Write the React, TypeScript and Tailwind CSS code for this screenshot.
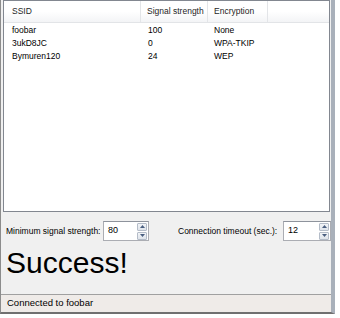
import React from 'react';

const rows = [
  { ssid: 'foobar', signal: '100', enc: 'None' },
  { ssid: '3ukD8JC', signal: '0', enc: 'WPA-TKIP' },
  { ssid: 'Bymuren120', signal: '24', enc: 'WEP' },
];

function Spinner() {
  return (
    <div className="flex flex-col w-[10px] h-[17px] gap-[1px]">
      <div className="flex-1 flex items-center justify-center border border-[#b4bcc8] bg-gradient-to-b from-[#f2f4f7] to-[#dfe4eb] rounded-[1px]">
        <svg width="5" height="3" viewBox="0 0 5 3">
          <path d="M0 3 L2.5 0 L5 3 Z" fill="#4a5f80" />
        </svg>
      </div>
      <div className="flex-1 flex items-center justify-center border border-[#b4bcc8] bg-gradient-to-b from-[#f2f4f7] to-[#dfe4eb] rounded-[1px]">
        <svg width="5" height="3" viewBox="0 0 5 3">
          <path d="M0 0 L2.5 3 L5 0 Z" fill="#4a5f80" />
        </svg>
      </div>
    </div>
  );
}

function NumberBox({ value, width }: { value: string; width: string }) {
  return (
    <div className={`${width} h-[20px] flex items-center justify-between bg-white border border-[#abadb3] border-t-[#8e939c] pl-[4px] pr-[1px]`}>
      <span className="text-[9px] text-black">{value}</span>
      <Spinner />
    </div>
  );
}

export default function App() {
  return (
    <div className="w-[340px] h-[318px] bg-white" style={{ fontFamily: '"Liberation Sans", Arial, sans-serif' }}>
      <div className="w-[335px] h-[314px] flex flex-col bg-[#f0f0f0] border-l border-l-[#8c8c8c] border-r-[4px] border-r-[#a9b0ba] border-b-2 border-b-[#707070]">
        {/* list view */}
        <div className="ml-[2px] w-[327px] h-[212px] bg-white border border-[#828790] flex flex-col">
          <div className="h-[22px] flex items-stretch text-[8.5px] text-[#1e1e1e] border-b border-[#e2e4e7] bg-gradient-to-b from-white from-50% to-[#f3f4f6]">
            <div className="w-[137px] flex items-center pl-[8px] border-r border-[#e3e5e8]">SSID</div>
            <div className="w-[67px] flex items-center pl-[6px] border-r border-[#e3e5e8]">Signal strength</div>
            <div className="w-[60px] flex items-center pl-[6px] border-r border-[#e3e5e8]">Encryption</div>
            <div className="flex-1" />
          </div>
          <div className="pt-[1px] flex flex-col text-[8.5px] text-black">
            {rows.map((r) => (
              <div key={r.ssid} className="h-[13px] flex items-center">
                <div className="w-[137px] pl-[8px]">{r.ssid}</div>
                <div className="w-[67px] pl-[7px]">{r.signal}</div>
                <div className="w-[60px] pl-[6px]">{r.enc}</div>
              </div>
            ))}
          </div>
        </div>

        {/* controls */}
        <div className="mt-[9px] h-[20px] flex items-center text-[8.5px] text-black">
          <span className="ml-[5px] w-[97px]">Minimum signal strength:</span>
          <NumberBox value="80" width="w-[46px]" />
          <span className="ml-[29px] w-[105px]">Connection timeout (sec.):</span>
          <NumberBox value="12" width="w-[48px]" />
        </div>

        <div className="mt-[7px] ml-[5px] text-[30px] leading-[30px] text-black">Success!</div>

        <div className="flex-1" />
        <div className="h-[18px] border-t border-[#a0a0a0] bg-[#efebe8] flex items-center pl-[6px] text-[9.5px] text-black">
          Connected to foobar
        </div>
      </div>
    </div>
  );
}
